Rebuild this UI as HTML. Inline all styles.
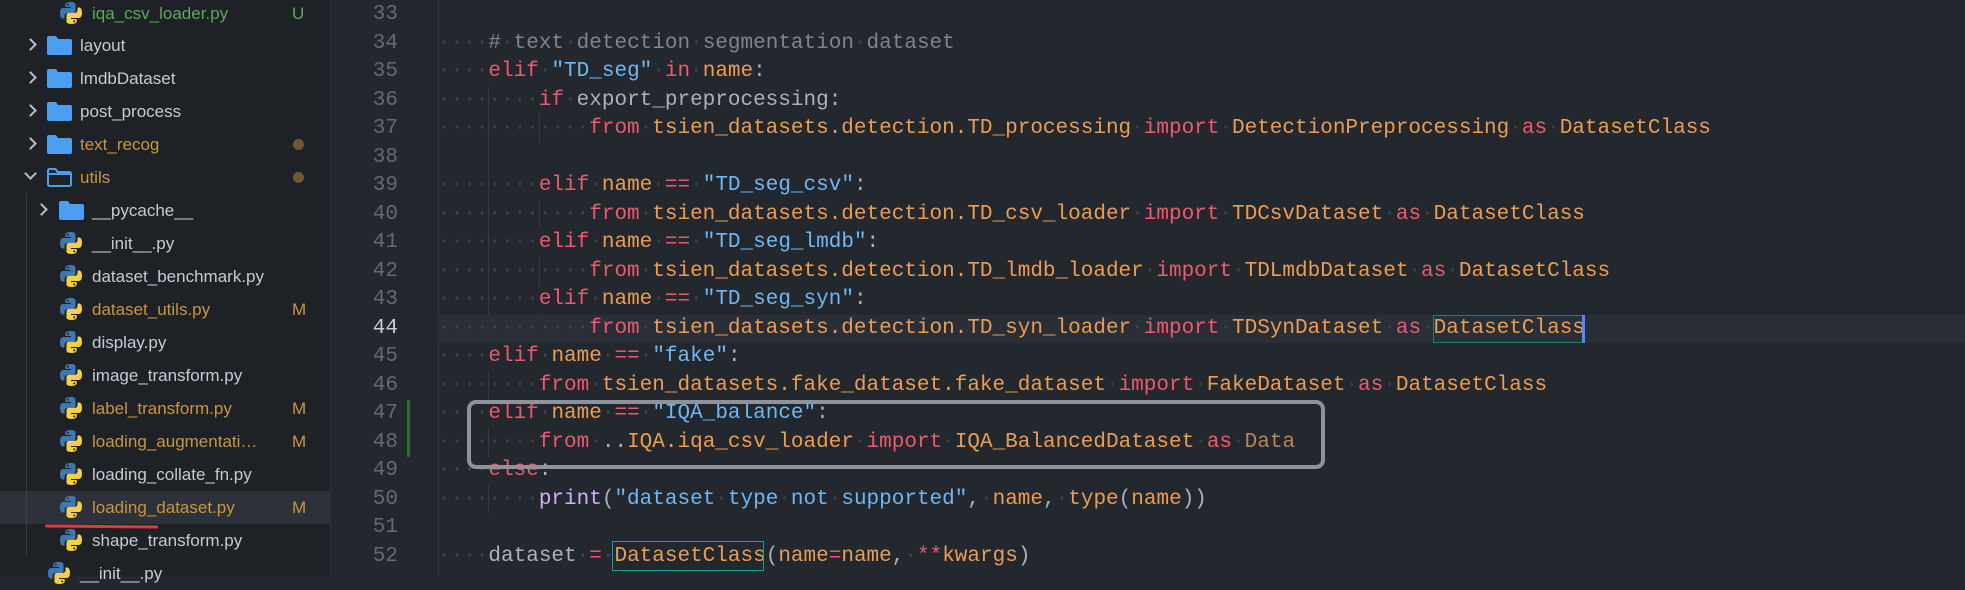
<!DOCTYPE html>
<html><head><meta charset="utf-8"><style>
*{margin:0;padding:0;box-sizing:border-box}
body{width:1965px;height:575px;overflow:hidden;background:#23272e;position:relative;font-family:"Liberation Sans",sans-serif}
#side{position:absolute;left:0;top:0;width:331px;height:575px;background:#1e2227;border-right:1px solid #2b3038}
.r{position:absolute;left:0;width:331px;height:33px;font-size:17px;line-height:33px;color:#c5cad3;white-space:nowrap}
.r span.t{position:absolute}
.b{position:absolute;left:292px;font-size:17px}
.dot{position:absolute;left:293px;top:11px;width:11px;height:11px;border-radius:50%;background:#6d5a30}
.chev{position:absolute;top:11px;width:9px;height:9px;border-right:2px solid #b8bec8;border-bottom:2px solid #b8bec8;transform:rotate(-45deg)}
.chev.d{transform:rotate(45deg);top:8px}
.ic{position:absolute;top:4px}
.m{color:#c9953f}.g{color:#5ea85a}
.ln{position:absolute;left:332px;width:66px;text-align:right;font-family:"Liberation Mono",monospace;font-size:21px;color:#636a76;height:28.5px;line-height:28.5px}
.cl{position:absolute;left:438px;font-family:"Liberation Mono",monospace;font-size:21px;height:28.5px;line-height:28.5px;white-space:pre;color:#abb2bf}
.k{color:#ef596f}.o{color:#ec9d52}.s{color:#6fb8f2}.c{color:#7f848e}.d{color:#3e444e}.p{color:#d2b0f5}.w{color:#abb2bf}
.gd{position:absolute;width:1px;background:#353a43}
</style></head><body>
<div id="side">
<div class="r" style="top:-3px"><svg class="ic" style="left:59px" width="24" height="24" viewBox="0 0 24 24"><path d="M11.8 1C6 1 6.3 3.5 6.3 3.5V6h5.7v1H4.2S1 6.7 1 12.2s2.8 5.3 2.8 5.3h1.7v-2.6s-.1-2.8 2.8-2.8h5.5s2.7 0 2.7-2.6V3.7S17 1 11.8 1zM8.8 2.6a1 1 0 1 1 0 2 1 1 0 0 1 0-2z" fill="#3d79b0"/><path d="M12.2 23c5.8 0 5.5-2.5 5.5-2.5V18H12v-1h7.8s3.2.3 3.2-5.2-2.8-5.3-2.8-5.3h-1.7v2.6s.1 2.8-2.8 2.8H10.2s-2.7 0-2.7 2.6v5.8S7 23 12.2 23zm3-1.6a1 1 0 1 1 0-2 1 1 0 0 1 0 2z" fill="#f5cf46"/></svg><span class="t g" style="left:92px">iqa_csv_loader.py</span><span class="b g">U</span></div>
<div class="r" style="top:29px"><i class="chev" style="left:26px"></i><svg class="ic" style="left:47px;top:7px" width="25" height="19" viewBox="0 0 25 19"><path d="M0 2a2 2 0 0 1 2-2h7l2 3h12a2 2 0 0 1 2 2v12a2 2 0 0 1-2 2H2a2 2 0 0 1-2-2z" fill="#4a9ff0"/></svg><span class="t" style="left:80px">layout</span></div>
<div class="r" style="top:62px"><i class="chev" style="left:26px"></i><svg class="ic" style="left:47px;top:7px" width="25" height="19" viewBox="0 0 25 19"><path d="M0 2a2 2 0 0 1 2-2h7l2 3h12a2 2 0 0 1 2 2v12a2 2 0 0 1-2 2H2a2 2 0 0 1-2-2z" fill="#4a9ff0"/></svg><span class="t" style="left:80px">lmdbDataset</span></div>
<div class="r" style="top:95px"><i class="chev" style="left:26px"></i><svg class="ic" style="left:47px;top:7px" width="25" height="19" viewBox="0 0 25 19"><path d="M0 2a2 2 0 0 1 2-2h7l2 3h12a2 2 0 0 1 2 2v12a2 2 0 0 1-2 2H2a2 2 0 0 1-2-2z" fill="#4a9ff0"/></svg><span class="t" style="left:80px">post_process</span></div>
<div class="r" style="top:128px"><i class="chev" style="left:26px"></i><svg class="ic" style="left:47px;top:7px" width="25" height="19" viewBox="0 0 25 19"><path d="M0 2a2 2 0 0 1 2-2h7l2 3h12a2 2 0 0 1 2 2v12a2 2 0 0 1-2 2H2a2 2 0 0 1-2-2z" fill="#4a9ff0"/></svg><span class="t m" style="left:80px">text_recog</span><i class="dot"></i></div>
<div class="r" style="top:161px"><i class="chev d" style="left:26px"></i><svg class="ic" style="left:47px;top:7px" width="25" height="19" viewBox="0 0 25 19"><path d="M1 2.5a1.5 1.5 0 0 1 1.5-1.5h6l2 3h12a1.5 1.5 0 0 1 1.5 1.5v11a1.5 1.5 0 0 1-1.5 1.5h-20A1.5 1.5 0 0 1 1 16.5z M1 6h23" fill="none" stroke="#4a9ff0" stroke-width="2"/></svg><span class="t m" style="left:80px">utils</span><i class="dot"></i></div>
<div class="r" style="top:194px"><i class="chev" style="left:37px"></i><svg class="ic" style="left:59px;top:7px" width="25" height="19" viewBox="0 0 25 19"><path d="M0 2a2 2 0 0 1 2-2h7l2 3h12a2 2 0 0 1 2 2v12a2 2 0 0 1-2 2H2a2 2 0 0 1-2-2z" fill="#4a9ff0"/></svg><span class="t" style="left:92px">__pycache__</span></div>
<div id="py"></div>
<div style="position:absolute;left:26px;top:193px;width:1px;height:362px;background:#3a3f47"></div>
</div>
<div style="position:absolute;left:45px;top:525px;width:113px;height:3px;background:#e0393e;border-radius:2px;transform:rotate(0.5deg)"></div>

<div class="gd" style="left:438px;top:0;height:575px"></div>
<div class="gd" style="left:488px;top:86px;height:114px"></div>
<div class="gd" style="left:488px;top:200px;height:143px"></div>
<div class="gd" style="left:539px;top:114px;height:29px"></div>
<div class="gd" style="left:539px;top:200px;height:29px"></div>
<div class="gd" style="left:539px;top:257px;height:29px"></div>
<div class="gd" style="left:539px;top:314px;height:29px"></div>
<div class="gd" style="left:488px;top:371px;height:29px"></div>
<div class="gd" style="left:488px;top:428px;height:29px"></div>
<div class="gd" style="left:488px;top:485px;height:29px"></div>
<div style="position:absolute;left:438px;top:315px;width:1527px;height:28px;background:#2a2e36"></div>
<div style="position:absolute;left:407px;top:400px;width:3px;height:57px;background:#2f6b35"></div>
<div id="code"></div>
<div style="position:absolute;left:1433px;top:315px;width:151px;height:28px;border:1px solid #1d7d80"></div>
<div style="position:absolute;left:1582px;top:315px;width:3px;height:28px;background:#528bff"></div>
<div style="position:absolute;left:612px;top:541px;width:152px;height:30px;border:1px solid #1d9a9a"></div>
<div style="position:absolute;left:467px;top:400px;width:858px;height:69px;border:4px solid #8d929b;border-radius:9px"></div>
<script>
var files=[["__init__.py",""],["dataset_benchmark.py",""],["dataset_utils.py","M"],["display.py",""],["image_transform.py",""],["label_transform.py","M"],["loading_augmentati…","M"],["loading_collate_fn.py",""],["loading_dataset.py","M"],["shape_transform.py",""]];
var ic=function(l){return '<svg class="ic" style="left:'+l+'px" width="24" height="24" viewBox="0 0 24 24"><path d="M11.8 1C6 1 6.3 3.5 6.3 3.5V6h5.7v1H4.2S1 6.7 1 12.2s2.8 5.3 2.8 5.3h1.7v-2.6s-.1-2.8 2.8-2.8h5.5s2.7 0 2.7-2.6V3.7S17 1 11.8 1zM8.8 2.6a1 1 0 1 1 0 2 1 1 0 0 1 0-2z" fill="#3d79b0"/><path d="M12.2 23c5.8 0 5.5-2.5 5.5-2.5V18H12v-1h7.8s3.2.3 3.2-5.2-2.8-5.3-2.8-5.3h-1.7v2.6s.1 2.8-2.8 2.8H10.2s-2.7 0-2.7 2.6v5.8S7 23 12.2 23zm3-1.6a1 1 0 1 1 0-2 1 1 0 0 1 0 2z" fill="#f5cf46"/></svg>';};
var h='';
files.forEach(function(f,i){var t=227+i*33;var cls=f[1]?'m':'';var bg=f[0]=="loading_dataset.py"?'background:#2c313a;':'';
h+='<div class="r" style="top:'+t+'px;'+bg+'">'+ic(59)+'<span class="t '+cls+'" style="left:92px">'+f[0]+'</span>'+(f[1]?'<span class="b m">M</span>':'')+'</div>';});
h+='<div class="r" style="top:557px">'+ic(47)+'<span class="t" style="left:80px">__init__.py</span></div>';
document.getElementById('py').outerHTML=h;
function D(n){return '<span class="d">'+'·'.repeat(n)+'</span>';}
function S(c,t){return '<span class="'+c+'">'+t+'</span>';}
var d1=D(1);
var L={
33:'',
34:D(4)+S('c','#·text·detection·segmentation·dataset').replace(/·/g,'<span class="d">·</span>'),
35:D(4)+S('k','elif')+d1+S('s','"TD_seg"')+d1+S('k','in')+d1+S('o','name')+S('w',':'),
36:D(8)+S('k','if')+d1+S('w','export_preprocessing:'),
37:D(12)+S('k','from')+d1+S('o','tsien_datasets.detection.TD_processing')+d1+S('k','import')+d1+S('o','DetectionPreprocessing')+d1+S('k','as')+d1+S('o','DatasetClass'),
38:'',
39:D(8)+S('k','elif')+d1+S('o','name')+d1+S('k','==')+d1+S('s','"TD_seg_csv"')+S('w',':'),
40:D(12)+S('k','from')+d1+S('o','tsien_datasets.detection.TD_csv_loader')+d1+S('k','import')+d1+S('o','TDCsvDataset')+d1+S('k','as')+d1+S('o','DatasetClass'),
41:D(8)+S('k','elif')+d1+S('o','name')+d1+S('k','==')+d1+S('s','"TD_seg_lmdb"')+S('w',':'),
42:D(12)+S('k','from')+d1+S('o','tsien_datasets.detection.TD_lmdb_loader')+d1+S('k','import')+d1+S('o','TDLmdbDataset')+d1+S('k','as')+d1+S('o','DatasetClass'),
43:D(8)+S('k','elif')+d1+S('o','name')+d1+S('k','==')+d1+S('s','"TD_seg_syn"')+S('w',':'),
44:D(12)+S('k','from')+d1+S('o','tsien_datasets.detection.TD_syn_loader')+d1+S('k','import')+d1+S('o','TDSynDataset')+d1+S('k','as')+d1+S('o','DatasetClass'),
45:D(4)+S('k','elif')+d1+S('o','name')+d1+S('k','==')+d1+S('s','"fake"')+S('w',':'),
46:D(8)+S('k','from')+d1+S('o','tsien_datasets.fake_dataset.fake_dataset')+d1+S('k','import')+d1+S('o','FakeDataset')+d1+S('k','as')+d1+S('o','DatasetClass'),
47:D(4)+S('k','elif')+d1+S('o','name')+d1+S('k','==')+d1+S('s','"IQA_balance"')+S('w',':'),
48:D(8)+S('k','from')+d1+S('w','..')+S('o','IQA.iqa_csv_loader')+d1+S('k','import')+d1+S('o','IQA_BalancedDataset')+d1+S('k','as')+d1+'<span style="color:#b5875a">Data</span>',
49:D(4)+S('k','else')+S('w',':'),
50:D(8)+S('p','print')+S('w','(')+S('s','"dataset·type·not·supported"').replace(/·/g,'<span class="d">·</span>')+S('w',',')+d1+S('o','name')+S('w',',')+d1+S('o','type')+S('w','(')+S('o','name')+S('w','))'),
51:'',
52:D(4)+S('w','dataset')+d1+S('k','=')+d1+S('o','DatasetClass')+S('w','(')+S('o','name')+S('k','=')+S('o','name')+S('w',',')+d1+S('k','**')+S('o','kwargs')+S('w',')')
};
var c='';
for(var n=33;n<=52;n++){var t=1+(n-33)*28.5;
c+='<div class="ln" style="top:'+t+'px;'+(n==44?'color:#c8ccd4':'')+'">'+n+'</div>';
c+='<div class="cl" style="top:'+t+'px">'+L[n]+'</div>';}
document.getElementById('code').outerHTML=c;
</script>
</body></html>
